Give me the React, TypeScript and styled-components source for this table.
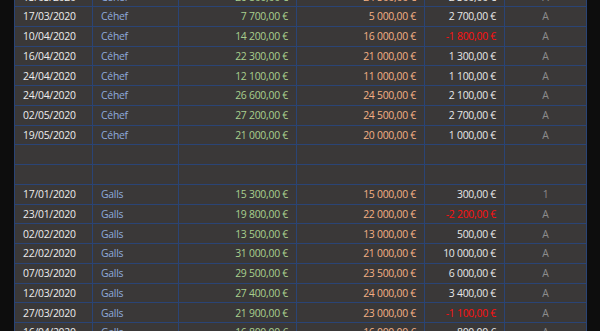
import React from "react";
import styled, { createGlobalStyle } from "styled-components";

const Global = createGlobalStyle`
  html, body { margin: 0; padding: 0; background: #0d0d0d; }
  body { font-family: "Open Sans", "Liberation Sans", sans-serif; }
`;

const Viewport = styled.div`
  width: 600px;
  height: 331px;
  overflow: hidden;
  background: #0d0d0d;
  padding-left: 14px;
  box-sizing: border-box;
`;

const Sheet = styled.div`
  display: grid;
  grid-template-columns: 77px 85px 117px 127px 79px 81px;
  grid-auto-rows: 18.75px;
  gap: 1px;
  padding: 0 1px;
  width: 573px;
  box-sizing: border-box;
  background: #2a4475;
  margin-top: -12.75px;
`;

type Tone = "date" | "name" | "in" | "out" | "diff" | "neg" | "flag";

const colors: Record<Tone, string> = {
  date: "#ededed",
  name: "#8eaadb",
  in: "#a9d08e",
  out: "#f4b084",
  diff: "#e8e8e8",
  neg: "#ff1010",
  flag: "#8c8c8c",
};

const Cell = styled.div<{ $tone: Tone; $align: "left" | "right" | "center" }>`
  background: #3a3838;
  color: ${(p) => colors[p.$tone]};
  font-size: 10.4px;
  letter-spacing: -0.25px;
  display: flex;
  align-items: center;
  justify-content: ${(p) =>
    p.$align === "left" ? "flex-start" : p.$align === "right" ? "flex-end" : "center"};
  padding: 0 8px;
  white-space: nowrap;
  overflow: hidden;
`;

type Row = [string, string, string, string, string, string] | null;

const rows: Row[] = [
  ["13/03/2020", "Céhef", "26 800,00 €", "24 500,00 €", "2 300,00 €", "A"],
  ["17/03/2020", "Céhef", "7 700,00 €", "5 000,00 €", "2 700,00 €", "A"],
  ["10/04/2020", "Céhef", "14 200,00 €", "16 000,00 €", "-1 800,00 €", "A"],
  ["16/04/2020", "Céhef", "22 300,00 €", "21 000,00 €", "1 300,00 €", "A"],
  ["24/04/2020", "Céhef", "12 100,00 €", "11 000,00 €", "1 100,00 €", "A"],
  ["24/04/2020", "Céhef", "26 600,00 €", "24 500,00 €", "2 100,00 €", "A"],
  ["02/05/2020", "Céhef", "27 200,00 €", "24 500,00 €", "2 700,00 €", "A"],
  ["19/05/2020", "Céhef", "21 000,00 €", "20 000,00 €", "1 000,00 €", "A"],
  null,
  null,
  ["17/01/2020", "Galls", "15 300,00 €", "15 000,00 €", "300,00 €", "1"],
  ["23/01/2020", "Galls", "19 800,00 €", "22 000,00 €", "-2 200,00 €", "A"],
  ["02/02/2020", "Galls", "13 500,00 €", "13 000,00 €", "500,00 €", "A"],
  ["22/02/2020", "Galls", "31 000,00 €", "21 000,00 €", "10 000,00 €", "A"],
  ["07/03/2020", "Galls", "29 500,00 €", "23 500,00 €", "6 000,00 €", "A"],
  ["12/03/2020", "Galls", "27 400,00 €", "24 000,00 €", "3 400,00 €", "A"],
  ["27/03/2020", "Galls", "21 900,00 €", "23 000,00 €", "-1 100,00 €", "A"],
  ["16/04/2020", "Galls", "16 800,00 €", "16 000,00 €", "800,00 €", "A"],
];

export default function App() {
  return (
    <>
      <Global />
      <Viewport>
        <Sheet>
          {rows.map((r, i) =>
            r === null ? (
              [0, 1, 2, 3, 4, 5].map((c) => (
                <Cell key={`${i}-${c}`} $tone="date" $align="left" />
              ))
            ) : (
              <React.Fragment key={i}>
                <Cell $tone="date" $align="left">{r[0]}</Cell>
                <Cell $tone="name" $align="left">{r[1]}</Cell>
                <Cell $tone="in" $align="right">{r[2]}</Cell>
                <Cell $tone="out" $align="right">{r[3]}</Cell>
                <Cell $tone={r[4].startsWith("-") ? "neg" : "diff"} $align="right">
                  {r[4]}
                </Cell>
                <Cell $tone="flag" $align="center">{r[5]}</Cell>
              </React.Fragment>
            )
          )}
        </Sheet>
      </Viewport>
    </>
  );
}
